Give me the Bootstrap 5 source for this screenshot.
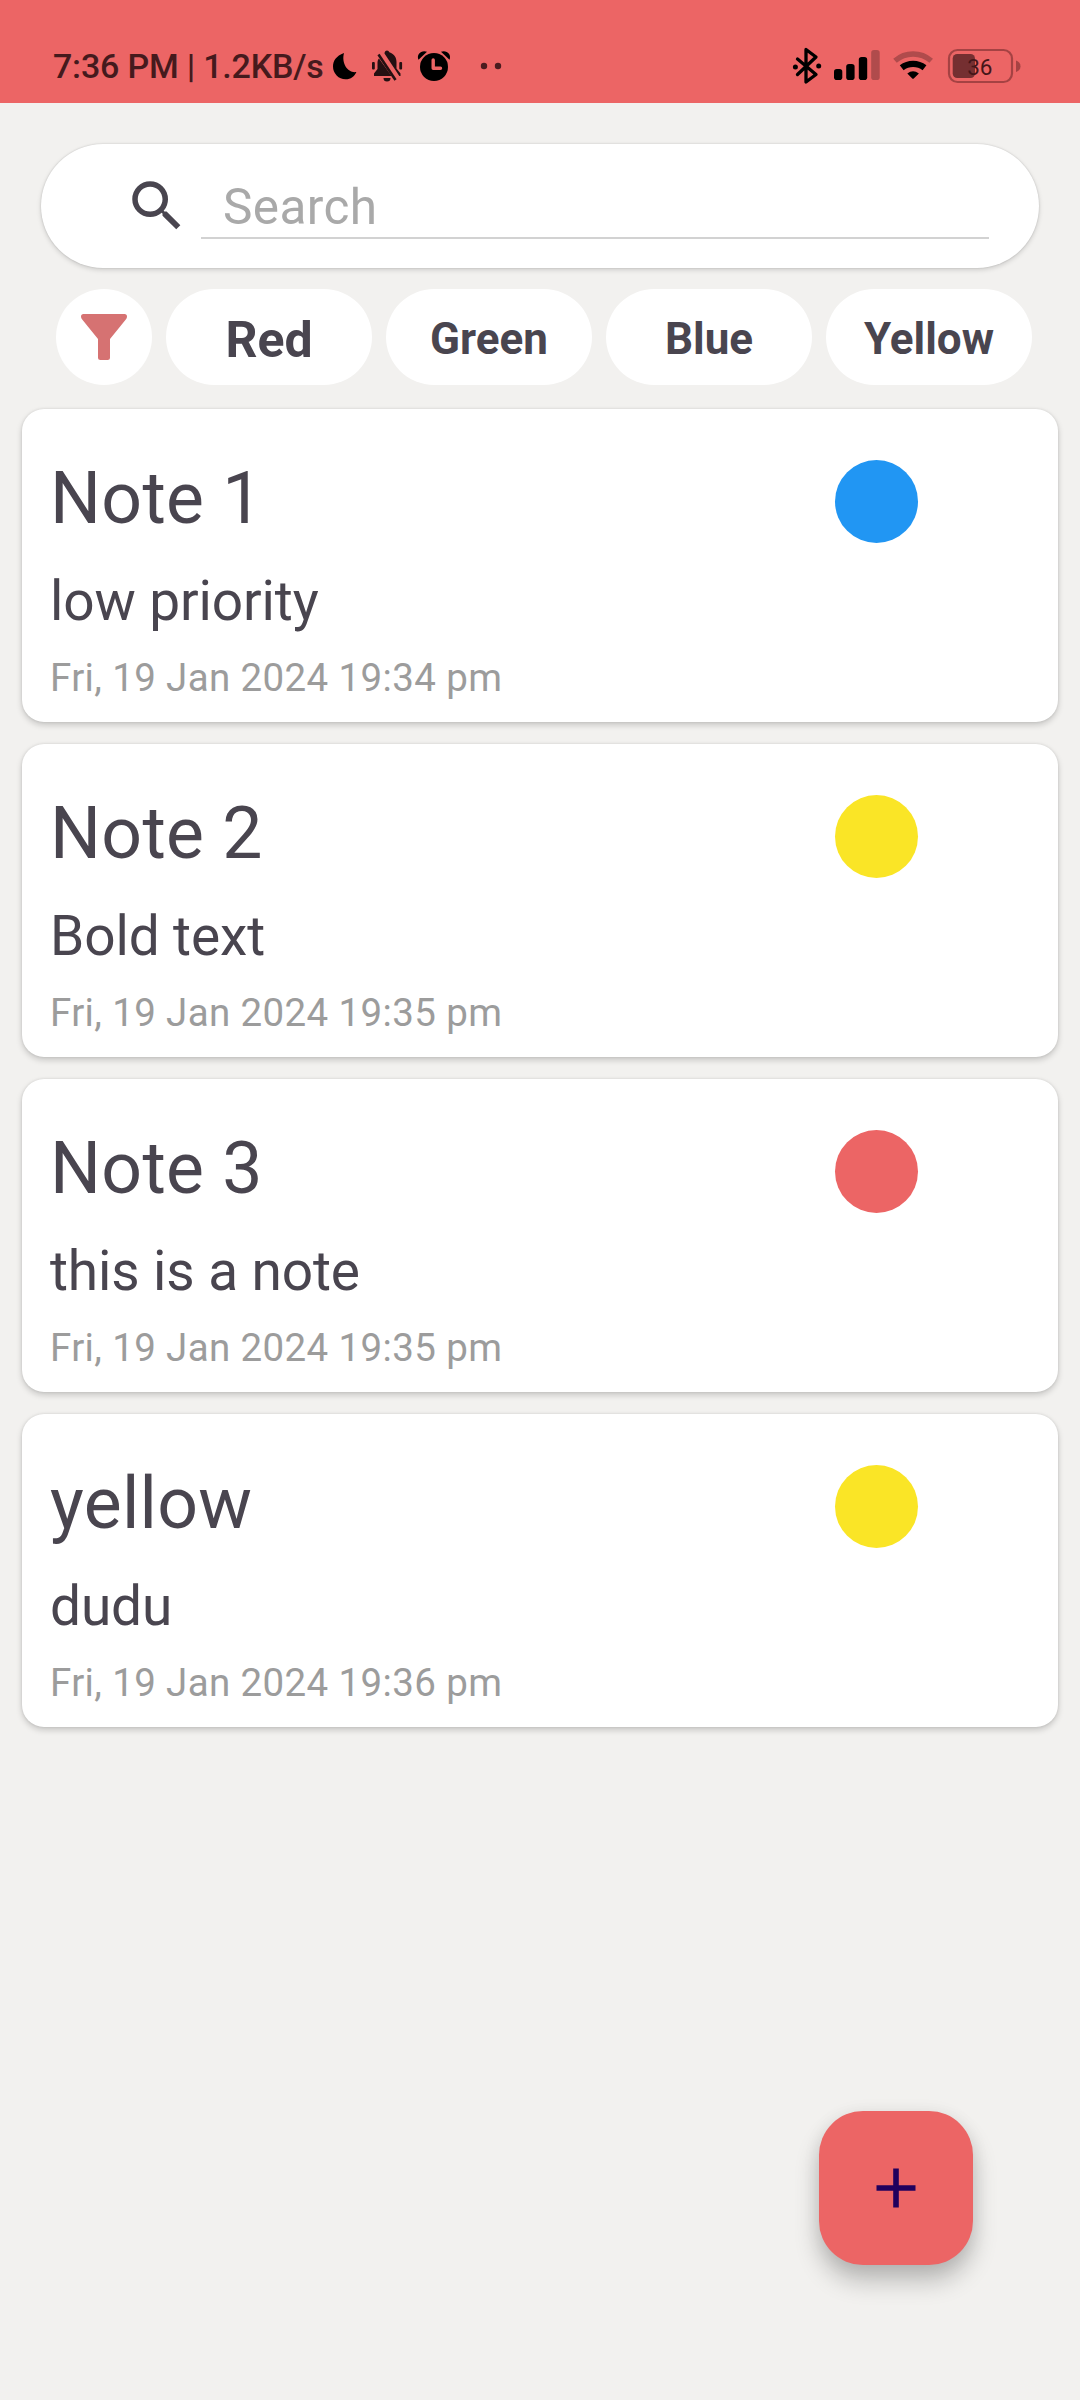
<!DOCTYPE html>
<html lang="en">
<head>
<meta charset="utf-8">
<meta name="viewport" content="width=device-width, initial-scale=1">
<title>Notes</title>
<link rel="stylesheet" href="https://cdn.jsdelivr.net/npm/bootstrap@5.3.0/dist/css/bootstrap.min.css">
<style>
  body { font-family: Roboto, "Liberation Sans", sans-serif; background: #f2f1ef; color: #49454f; width: 1080px; height: 2400px; overflow: hidden; position: relative; }
  svg { display: block; flex: none; }
  .statusbar { height: 103px; background: #ec6565; padding: 46px 60px 0 53px; }
  .status-text { font-size: 34px; line-height: 40px; font-weight: 500; color: #451a1d; letter-spacing: -.2px; width: 275px; white-space: nowrap; }
  .searchbar { margin: 41px 41px 0; height: 124px; padding: 0 50px 0 83px; box-shadow: 0 2px 5px rgba(0,0,0,.15), 0 0 2px rgba(0,0,0,.16); }
  .search-icon { margin-top: 29px; }
  .search-field { margin: 28px 0 0 11px; height: 67px; border: 0; border-bottom: 2px solid #d2d2d2; border-radius: 0; padding: 4px 0 0 22px; font-size: 49.5px; line-height: 60px; color: #49454f; background: transparent; letter-spacing: .4px; }
  .search-field:focus { box-shadow: none; background: transparent; }
  .search-field::placeholder { color: #a9a9a9; opacity: 1; }
  .filters { margin: 21px 48px 0 56px; gap: 14px; }
  .chip { width: 206px; height: 96px; border-radius: 48px; padding: 4px 0 0; font-size: 44px; font-weight: 700; color: #49454f; background: #fff; border: 0; line-height: 1; }
  .chip-funnel { width: 96px; padding: 0; }
  .chip-active { font-size: 50px; padding-top: 5px; }
  .notes { margin: 24px 22px 0; gap: 22px; }
  .note { height: 313px; border: 0; border-radius: 22px; padding: 48px 140px 0 28px; color: #49454f; box-shadow: 0 3px 6px rgba(0,0,0,.18), 0 0 3px rgba(0,0,0,.1); }
  .note-title { font-size: 71.5px; line-height: 84px; font-weight: 400; margin: 0; letter-spacing: .3px; white-space: nowrap; }
  .note-body { font-size: 55px; line-height: 64px; margin: 28px 0 0; letter-spacing: -.12px; white-space: nowrap; }
  .note-date { font-size: 38.5px; line-height: 46px; margin: 22px 0 0; color: #9c9c9c; white-space: nowrap; letter-spacing: .37px; }
  .dot { width: 83px; height: 83px; margin-top: 3px; }
  .dot-blue { background: #2196f3; } .dot-yellow { background: #fae526; } .dot-red { background: #ec6565; }
  .fab { position: absolute; left: 819px; top: 2111px; width: 154px; height: 154px; border-radius: 44px; background: #ec6565; border: 0; box-shadow: 0 16px 24px rgba(0,0,0,.23), 0 2px 18px rgba(0,0,0,.07); }
</style>
</head>
<body>
<header class="statusbar d-flex justify-content-between align-items-start">
  <div class="d-flex">
    <div class="status-text">7:36 PM | 1.2KB/s</div>
    <svg width="180" height="40" viewBox="328 46 180 40">
      <path d="M344 53C336 56 333 61 333 66.500A12.800 12.800 0 0 0 345.500 79.300C351 79.300 354.500 76.500 356.400 72C348.500 73.500 341 64 344 53Z" fill="#000"/>
      <g fill="#231012">
        <path d="M384.500 53.500L384.700 52.300A2.400 2.400 0 0 1 389.300 52.300C394.500 54 396.500 58 396.500 62V68.500L400.500 73.500V76H399.300Z"/>
        <path d="M379 58.500L391.500 76H374V73.500L377.500 69V62.500C377.500 61 378 59.500 379 58.500Z"/>
        <path d="M383.500 78H390.500A3.500 3.500 0 0 1 383.500 78Z"/>
        <path d="M378.500 54.500L395.500 80" stroke="#231012" stroke-width="2.600"/>
        <rect x="372" y="62" width="2.800" height="7.500" rx="1"/><rect x="399.300" y="62" width="2.800" height="7.500" rx="1"/>
      </g>
      <circle cx="434" cy="67" r="14" fill="#000"/>
      <path d="M418.500 59.800C416 54 422 49.500 427 51.800ZM449.500 59.800C452 54 446 49.500 441 51.800Z" fill="#000"/>
      <path d="M433.200 60V68.200H440.500" fill="none" stroke="#ec6565" stroke-width="3.400" stroke-linecap="round" stroke-linejoin="round"/>
      <circle cx="484" cy="66" r="3.200" fill="#4a1c1f"/><circle cx="498" cy="66" r="3.200" fill="#4a1c1f"/>
    </svg>
  </div>
  <svg width="230" height="40" viewBox="790 46 230 40" overflow="visible">
    <path d="M797.500 59L816 74.500L806 82V49.500L816 57L797.500 74.500" fill="none" stroke="#000" stroke-width="3.300" stroke-linejoin="round" stroke-linecap="round"/>
    <circle cx="795.400" cy="67" r="2.500"/><circle cx="818.700" cy="66" r="2.500"/>
    <rect x="834" y="69" width="8.300" height="11" rx="2.800"/><rect x="846.200" y="64" width="8.400" height="16" rx="2.800"/><rect x="858.800" y="57" width="8.400" height="23" rx="2.800"/>
    <rect x="871.200" y="50" width="8.500" height="30" rx="2.800" fill="#b04b4c"/>
    <path d="M895 60.800A27.500 27.500 0 0 1 931.200 60.800" fill="none" stroke="#b04b4c" stroke-width="5.400"/>
    <path d="M901.700 67.800A18.500 18.500 0 0 1 924.500 67.800" fill="none" stroke="#000" stroke-width="6.200"/>
    <path d="M907.300 73.500Q913 69 918.900 73.500L914 78.300Q913 79.300 912 78.300Z"/>
    <rect x="949" y="50" width="63" height="32" rx="8.500" fill="none" stroke="#a54243" stroke-width="2.200"/>
    <path d="M1016 60.500Q1020.500 62 1020.500 66.200T1016 72Z" fill="#a54243"/>
    <rect x="952.700" y="54" width="22.300" height="24" rx="4.500" fill="#752f31"/>
    <text x="967.200" y="74.700" font-size="22.500" font-family="Roboto, sans-serif" fill="#451518">36</text>
  </svg>
</header>

<main>
  <form class="searchbar d-flex align-items-start bg-white rounded-pill">
    <svg class="search-icon" width="66" height="66" viewBox="0 0 24 24" fill="#49454f"><path d="M15.500 14h-.79l-.28-.27A6.471 6.471 0 0 0 16 9.500 6.500 6.500 0 1 0 9.500 16c1.610 0 3.090-.59 4.230-1.570l.27.28v.79l5 4.990L20.490 19l-4.990-5zm-6 0C7.010 14 5 11.990 5 9.500S7.010 5 9.500 5 14 7.010 14 9.500 11.990 14 9.500 14z"/></svg>
    <input class="search-field form-control" type="text" placeholder="Search" aria-label="Search">
  </form>

  <div class="filters d-flex">
    <button class="chip chip-funnel btn d-flex align-items-center justify-content-center" type="button" aria-label="Filter">
      <svg width="46" height="46" viewBox="0 0 46 46" fill="#d67272"><path d="M2.500 0H43.500Q46 0 46 2.500Q46 4 45 5.200L29 25V43.500Q29 46 26.500 46H19.500Q17 46 17 43.500V25L1 5.200Q0 4 0 2.500Q0 0 2.500 0Z"/></svg>
    </button>
    <button class="chip chip-active btn" type="button">Red</button>
    <button class="chip btn" type="button">Green</button>
    <button class="chip btn" type="button">Blue</button>
    <button class="chip btn" type="button">Yellow</button>
  </div>

  <section class="notes d-flex flex-column">
    <article class="note card flex-row justify-content-between align-items-start">
      <div><h2 class="note-title">Note 1</h2><p class="note-body">low priority</p><p class="note-date">Fri, 19 Jan 2024 19:34 pm</p></div>
      <span class="dot dot-blue rounded-circle"></span>
    </article>
    <article class="note card flex-row justify-content-between align-items-start">
      <div><h2 class="note-title">Note 2</h2><p class="note-body">Bold text</p><p class="note-date">Fri, 19 Jan 2024 19:35 pm</p></div>
      <span class="dot dot-yellow rounded-circle"></span>
    </article>
    <article class="note card flex-row justify-content-between align-items-start">
      <div><h2 class="note-title">Note 3</h2><p class="note-body">this is a note</p><p class="note-date">Fri, 19 Jan 2024 19:35 pm</p></div>
      <span class="dot dot-red rounded-circle"></span>
    </article>
    <article class="note card flex-row justify-content-between align-items-start">
      <div><h2 class="note-title">yellow</h2><p class="note-body">dudu</p><p class="note-date">Fri, 19 Jan 2024 19:36 pm</p></div>
      <span class="dot dot-yellow rounded-circle"></span>
    </article>
  </section>
</main>

<button class="fab btn d-flex align-items-center justify-content-center p-0" type="button" aria-label="Add note">
  <svg width="40" height="40" viewBox="0 0 40 40" fill="#21005d"><path d="M17.200 .5H22.800V17.200H39.500V22.800H22.800V39.500H17.200V22.800H.5V17.200H17.200Z"/></svg>
</button>
<script src="https://cdn.jsdelivr.net/npm/bootstrap@5.3.0/dist/js/bootstrap.bundle.min.js"></script>
</body>
</html>
